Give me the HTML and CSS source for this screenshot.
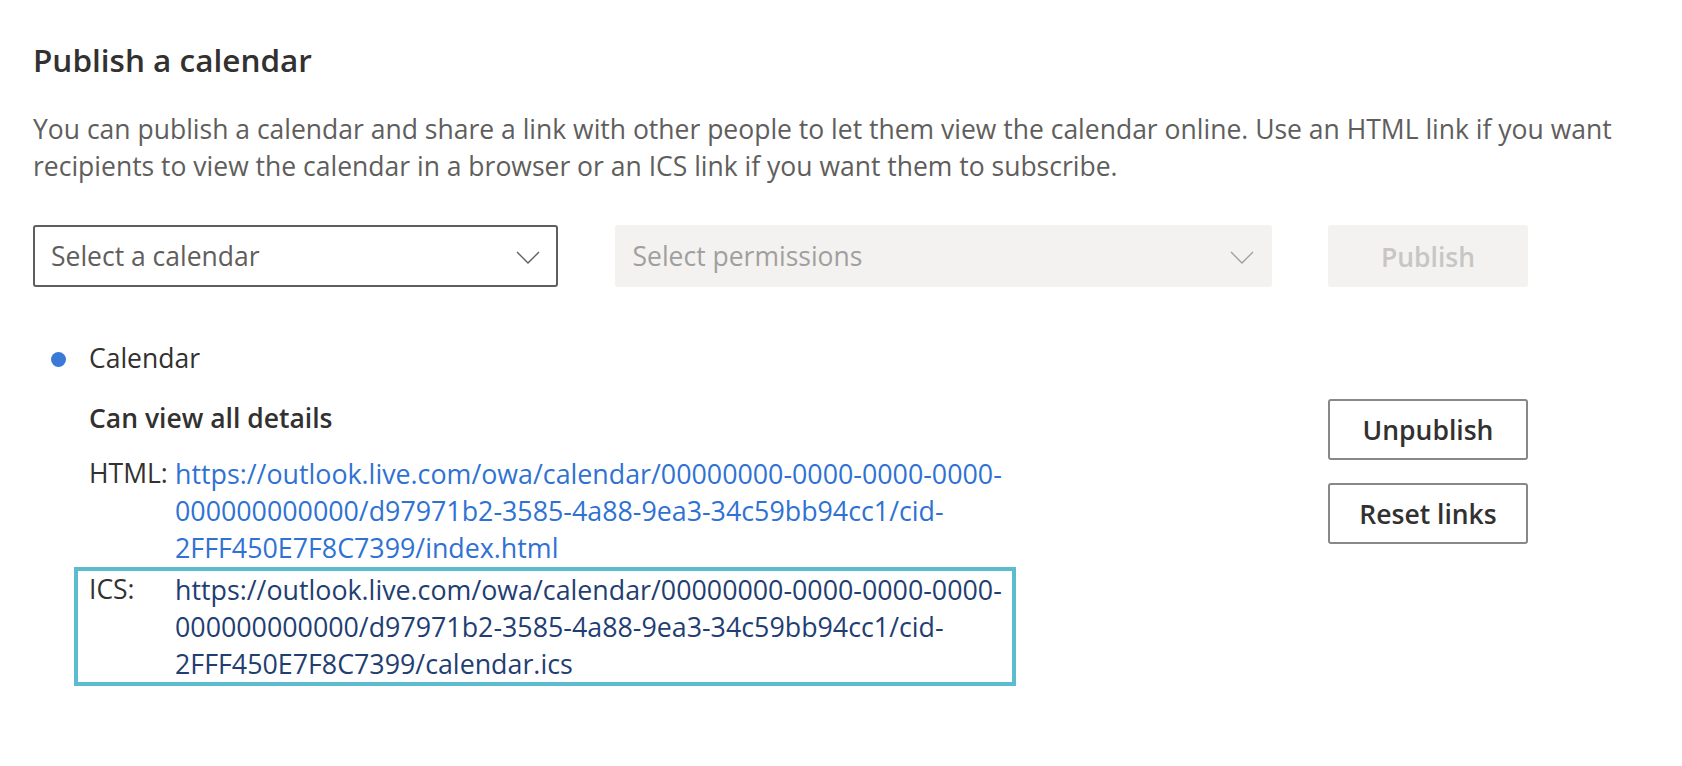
FILE: index.html
```html
<!DOCTYPE html>
<html lang="en">
<head>
<meta charset="utf-8">
<title>Publish a calendar</title>
<link rel="stylesheet" href="styles.css">
</head>
<body>
<main class="page">
  <h1 class="title">Publish a calendar</h1>
  <p class="intro">You can publish a calendar and share a link with other people to let them view the calendar online. Use an HTML link if you want recipients to view the calendar in a browser or an ICS link if you want them to subscribe.</p>

  <div class="controls">
    <div class="select select-active">
      <span class="select-text">Select a calendar</span>
      <svg class="chevron" width="24" height="13" viewBox="0 0 24 13"><path d="M1 1 L12 12 L23 1" fill="none" stroke="currentColor" stroke-width="1.4"/></svg>
    </div>
    <div class="select select-disabled">
      <span class="select-text">Select permissions</span>
      <svg class="chevron" width="24" height="13" viewBox="0 0 24 13"><path d="M1 1 L12 12 L23 1" fill="none" stroke="currentColor" stroke-width="1.4"/></svg>
    </div>
    <button class="btn btn-disabled" type="button">Publish</button>
  </div>

  <section class="published">
    <div class="cal-name">
      <span class="dot"></span>
      <span>Calendar</span>
    </div>
    <div class="perm">
      <div class="perm-main">
        <div class="perm-title">Can view all details</div>
        <div class="link-row link-row-html">
          <span class="link-label">HTML:</span>
          <a class="link link-html" href="#">https://outlook.live.com/owa/calendar/00000000-0000-0000-0000-<br>000000000000/d97971b2-3585-4a88-9ea3-34c59bb94cc1/cid-<br>2FFF450E7F8C7399/index.html</a>
        </div>
        <div class="link-row link-row-selected">
          <span class="link-label">ICS:</span>
          <a class="link link-ics" href="#">https://outlook.live.com/owa/calendar/00000000-0000-0000-0000-<br>000000000000/d97971b2-3585-4a88-9ea3-34c59bb94cc1/cid-<br>2FFF450E7F8C7399/calendar.ics</a>
        </div>
      </div>
      <div class="actions">
        <button class="btn btn-outline" type="button">Unpublish</button>
        <button class="btn btn-outline" type="button">Reset links</button>
      </div>
    </div>
  </section>
</main>
</body>
</html>
```

FILE: styles.css
```css
* {
  box-sizing: border-box;
}

html, body {
  margin: 0;
  padding: 0;
  background: #ffffff;
}

body {
  font-family: "Segoe UI", "Open Sans", "Noto Sans", sans-serif;
  font-size: 26.5px;
  line-height: 37px;
  color: #323130;
}

.page {
  width: 1528px;
  padding: 40px 0 0 33px;
}

.title {
  margin: 0;
  font-size: 31.5px;
  line-height: 40px;
  font-weight: 600;
  color: #323130;
}

.intro {
  margin: 31px 0 0 0;
  width: 1620px;
  color: #605e5c;
}

.controls {
  margin-top: 40px;
  display: flex;
  justify-content: space-between;
  align-items: stretch;
  height: 62px;
}

.select {
  display: flex;
  align-items: center;
  justify-content: space-between;
  border-radius: 3px;
  padding: 0 16px 0 16px;
}

.select-active {
  width: 525px;
  border: 2px solid #605e5c;
  color: #605e5c;
}

.select-disabled {
  width: 657px;
  border: 2px solid #f3f2f1;
  background: #f3f2f1;
  color: #a19f9d;
}

.select-text {
  padding-top: 1px;
}

.chevron {
  display: block;
  margin-top: 2px;
}

.btn {
  font-family: inherit;
  font-size: 26.5px;
  line-height: 37px;
  font-weight: 600;
  width: 200px;
  border-radius: 3px;
  padding: 2px 0 0 0;
  cursor: default;
}

.btn-disabled {
  background: #f3f2f1;
  border: 2px solid #f3f2f1;
  color: #c8c6c4;
}

.btn-outline {
  height: 61px;
  background: #ffffff;
  border: 2px solid #8a8886;
  color: #323130;
}

.published {
  margin-top: 53px;
}

.cal-name {
  display: flex;
  align-items: center;
}

.dot {
  width: 15px;
  height: 15px;
  border-radius: 50%;
  background: #3a7ad6;
  margin-left: 18px;
  margin-right: 23px;
  margin-top: 1px;
}

.perm {
  margin-top: 23px;
  display: flex;
  justify-content: space-between;
  align-items: flex-start;
}

.perm-title {
  padding-left: 56px;
  font-weight: 600;
  margin-bottom: 14px;
}

.link-row {
  margin-left: 41px;
  width: 942px;
  display: grid;
  grid-template-columns: 86px 1fr;
  border: 4px solid transparent;
  padding: 0 4px 0 11px;
}

.link-row-html {
  margin-bottom: -3px;
}

.link-row-selected {
  border-color: #5bbccf;
}

.link-label {
  color: #323130;
}

.link {
  font-size: 26.8px;
  text-decoration: none;
  white-space: nowrap;
}

.link-html {
  color: #2f72d3;
}

.link-ics {
  color: #1f3e72;
}

.actions {
  margin-top: -1px;
  width: 200px;
  display: flex;
  flex-direction: column;
  gap: 23px;
}
```
